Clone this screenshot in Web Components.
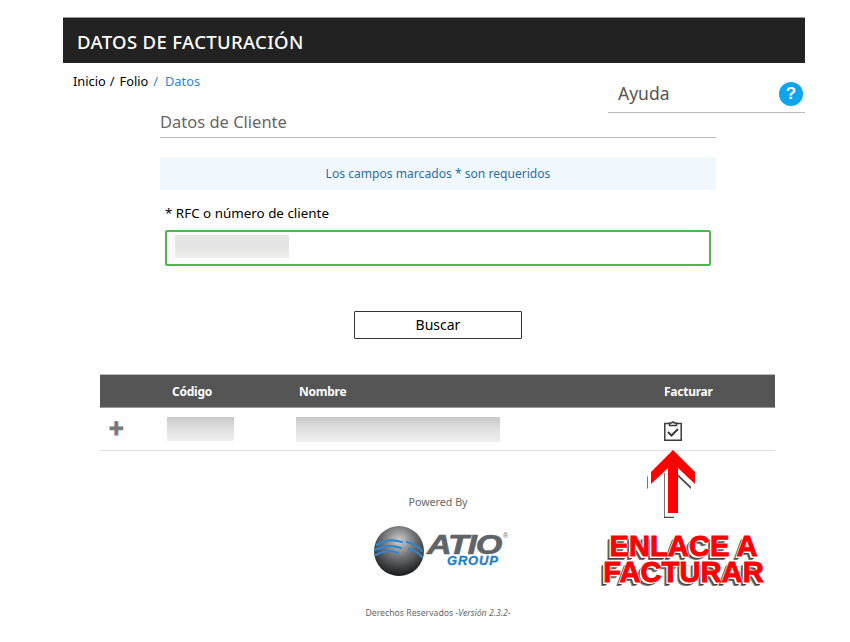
<!DOCTYPE html>
<html lang="es">
<head>
<meta charset="utf-8">
<title>Datos de facturación</title>
<style>
  html, body { margin: 0; background: #fff; }
  body { font-family: "Noto Sans", "Open Sans", sans-serif; color: #000; }
</style>
</head>
<body>
<billing-page>
  <page-header slot="header">DATOS DE FACTURACIÓN</page-header>
  <bread-crumbs slot="crumbs"></bread-crumbs>
  <help-box slot="help">Ayuda</help-box>
  <client-form slot="form"></client-form>
  <result-table slot="table"></result-table>
  <invoice-hint slot="hint"></invoice-hint>
  <powered-footer slot="footer"></powered-footer>
</billing-page>

<script>
class BillingPage extends HTMLElement {
    connectedCallback() {
        this.attachShadow({ mode: 'open' });
        this.shadowRoot.innerHTML = `
            <style>
                :host { display: block; width: 850px; height: 642px; position: relative; overflow: hidden; }
                .top { padding: 17px 45px 0 63px; }
                .sub { display: flex; justify-content: space-between; height: 49px; }
                .form { padding: 0 134px 0 160px; }
                .table { padding: 0 75px 0 100px; margin-top: 35px; }
            </style>
            <div class="top">
                <slot name="header"></slot>
                <div class="sub">
                    <slot name="crumbs"></slot>
                    <slot name="help"></slot>
                </div>
            </div>
            <div class="form"><slot name="form"></slot></div>
            <div class="table"><slot name="table"></slot></div>
            <slot name="footer"></slot>
            <slot name="hint"></slot>
        `;
    }
}

class PageHeader extends HTMLElement {
    connectedCallback() {
        this.attachShadow({ mode: 'open' });
        this.shadowRoot.innerHTML = `
            <style>
                :host {
                    display: flex; align-items: center; height: 46px; padding: 1px 0 0 14px; box-sizing: border-box;
                    background: #222; color: #fff; font-size: 18.5px; font-weight: 500; letter-spacing: 0.35px;
                    border-top: 1px solid #999;
                }
            </style>
            <slot></slot>
        `;
    }
}

class BreadCrumbs extends HTMLElement {
    connectedCallback() {
        this.attachShadow({ mode: 'open' });
        this.shadowRoot.innerHTML = `
            <style>
                :host { display: block; padding: 8px 0 0 10px; font-size: 12.8px; line-height: 20px; }
                .sep { margin: 0 5px 0 4px; }
                .sep.on { margin: 0 7px 0 5px; }
                .on { color: #2a86cf; }
            </style>
            <span>Inicio</span><span class="sep">/</span><span>Folio</span><span class="sep on">/</span><span class="on">Datos</span>
        `;
    }
}

class HelpBox extends HTMLElement {
    connectedCallback() {
        this.attachShadow({ mode: 'open' });
        this.shadowRoot.innerHTML = `
            <style>
                :host {
                    display: flex; align-items: center; justify-content: space-between; box-sizing: border-box;
                    width: 197px; height: 38px; margin-top: 12px; padding: 0 2px 0 10px;
                    border-bottom: 1px solid #bbb; color: #555; font-size: 17.5px;
                }
                .txt { margin-top: -2px; }
                .icon {
                    width: 24px; height: 24px; border-radius: 50%; background: #0ea5ee; color: #fff;
                    display: flex; align-items: center; justify-content: center;
                    font: bold 17px "Liberation Sans", sans-serif;
                }
            </style>
            <span class="txt"><slot></slot></span>
            <span class="icon">?</span>
        `;
    }
}

class ClientForm extends HTMLElement {
    connectedCallback() {
        this.attachShadow({ mode: 'open' });
        this.shadowRoot.innerHTML = `
            <style>
                :host { display: block; }
                h2 { margin: 0; height: 25px; line-height: 20px; font-size: 16.5px; font-weight: 400; color: #666; border-bottom: 1px solid #bbb; }
                .note {
                    margin: 19px 0 0; height: 33px; line-height: 33px; text-align: center;
                    background: #f0f7fd; color: #2c6ea8; font-size: 12.1px;
                }
                label { display: block; margin: 13px 0 0 5px; font-size: 13.4px; line-height: 20px; }
                .field {
                    box-sizing: border-box; margin: 7px 5px 0; height: 36px; padding: 3px 8px;
                    border: 2px solid #4fb54f; border-radius: 2px; background: #fff;
                }
                .blur { display: block; width: 114px; height: 23px; background: linear-gradient(#e6e7e5, #e3e3e3 45%, #eeefed); }
                .actions { display: flex; justify-content: center; margin-top: 45px; }
                button {
                    box-sizing: border-box; width: 168px; height: 28px; padding: 0 0 2px; background: #fff;
                    border: 1px solid #333; border-radius: 1px; font: 14px "Noto Sans", sans-serif; color: #000;
                }
            </style>
            <h2>Datos de Cliente</h2>
            <p class="note">Los campos marcados * son requeridos</p>
            <label>* RFC o número de cliente</label>
            <div class="field"><span class="blur"></span></div>
            <div class="actions"><button>Buscar</button></div>
        `;
    }
}

class ResultTable extends HTMLElement {
    connectedCallback() {
        this.attachShadow({ mode: 'open' });
        this.shadowRoot.innerHTML = `
            <style>
                :host { display: block; }
                .grid { display: grid; grid-template-columns: 72px 127px 365px 1fr; align-items: center; }
                .head {
                    height: 34px; background: #555; color: #fff; font-size: 12px; font-weight: 700; letter-spacing: -0.25px;
                    border-top: 1px solid #bbb; border-bottom: 1px solid #999; box-sizing: border-box;
                }
                .row { height: 42px; border-bottom: 1px solid #ddd; box-sizing: content-box; grid-template-columns: 67px 129px 354px 1fr; }
                .plus { font: bold 25px "Liberation Sans", sans-serif; color: #777; -webkit-text-stroke: 1px #777; padding-left: 9px; line-height: 1; margin-top: -1px; }
                .blur { display: block; height: 24px; background: linear-gradient(#c8c8c8, #dedede 45%, #f0f0f0); }
                .code { width: 67px; }
                .name { width: 204px; height: 25px; }
                svg { display: block; margin-left: 13px; margin-top: 4px; }
            </style>
            <div class="grid head"><span></span><span>Código</span><span>Nombre</span><span>Facturar</span></div>
            <div class="grid row">
                <span class="plus">+</span>
                <span class="blur code"></span>
                <span class="blur name"></span>
                <svg width="20" height="22" viewBox="0 0 20 22" fill="none" stroke="#3a3a3a" stroke-width="1.5">
                    <path d="M6 3.5H1.8v16.8h16.4V3.5H14"/>
                    <path d="M6.5 5.5V3h2.2a1.4 1.4 0 0 1 2.6 0h2.2v2.5z"/>
                    <path d="M5 12l3.5 3.5 6.5-6.5" stroke-width="2"/>
                </svg>
            </div>
        `;
    }
}

class InvoiceHint extends HTMLElement {
    connectedCallback() {
        this.attachShadow({ mode: 'open' });
        this.shadowRoot.innerHTML = `
            <style>
                :host { display: block; position: absolute; left: 590px; top: 448px; width: 190px; height: 145px; }
                svg { position: absolute; left: 50px; top: 0; }
                .msg {
                    position: absolute; left: 6px; top: 85px; width: 175px; text-align: center;
                    font: 900 29.2px/26px "Liberation Sans", sans-serif; color: #f00; white-space: nowrap;
                    -webkit-text-stroke: 1px #f00;
                    text-shadow: 1px 0 #fff, -1px 0 #fff, 0 1px #fff, 0 -1px #fff, -2px 2px #fff, -3px 3px #444, -4px 4px #777;
                }
            </style>
            <svg width="64" height="72" viewBox="0 0 64 72">
                <path transform="translate(-4 5)" fill="#444" d="M33 2L55 24V36L38 20V65H28V20L11 36V24Z"/>
                <path transform="translate(-2.5 3)" fill="#fff" stroke="#fff" stroke-width="1.5" d="M33 2L55 24V36L38 20V65H28V20L11 36V24Z"/>
                <path fill="#f00" d="M33 2L55 24V36L38 20V65H28V20L11 36V24Z"/>
            </svg>
            <div class="msg">ENLACE A<br>FACTURAR</div>
        `;
    }
}

class PoweredFooter extends HTMLElement {
    connectedCallback() {
        this.attachShadow({ mode: 'open' });
        this.shadowRoot.innerHTML = `
            <style>
                :host { display: block; margin-top: 43px; margin-left: 13px; text-align: center; color: #666; width: 850px; }
                .by { font-size: 10.7px; line-height: 16px; }
                .logo { display: flex; justify-content: center; align-items: flex-start; height: 57px; margin-top: 14px; padding-left: 20px; }
                .mark { position: relative; width: 94px; height: 56px; margin-left: 4px; font-family: "Liberation Sans", sans-serif; font-style: italic; font-weight: 900; text-align: left; }
                .atio { position: absolute; left: -2px; top: 7px; font-size: 28px; line-height: 28px; letter-spacing: -1px; color: #5e6468; -webkit-text-stroke: 0.6px #5e6468; transform: scaleX(1.22); transform-origin: left; }
                .reg { position: absolute; left: 74px; top: 8px; font-size: 7px; font-style: normal; font-weight: 400; }
                .group { position: absolute; left: 18px; top: 30px; font-size: 13px; line-height: 14px; letter-spacing: 0.8px; color: #1f7fc4; -webkit-text-stroke: 0.3px #1f7fc4; }
                .legal { font-size: 8.7px; line-height: 12px; margin-top: 26px; }
            </style>
            <div class="by">Powered By</div>
            <div class="logo">
                <svg width="52" height="52" viewBox="0 0 52 52" style="margin-top:1px">
                    <defs>
                        <radialGradient id="ball" cx="0.5" cy="0.3" r="0.72">
                            <stop offset="0" stop-color="#cfd1d2"/>
                            <stop offset="0.45" stop-color="#6f7173"/>
                            <stop offset="1" stop-color="#141516"/>
                        </radialGradient>
                    </defs>
                    <circle cx="26" cy="26" r="25" fill="url(#ball)"/>
                    <g fill="none" stroke="#2f86cf" stroke-width="2.2" stroke-linecap="round">
                        <path d="M4 20C12 15 20 14 29 17"/>
                        <path d="M2 25C12 20 20 20 28 23"/>
                        <path d="M3 30C12 25 18 25 25 28"/>
                        <path d="M34 17C41 19 46 22 49 26"/>
                        <path d="M36 24C41 25 46 28 49 32"/>
                    </g>
                </svg>
                <div class="mark"><span class="atio">ATIO</span><span class="reg">®</span><span class="group">GROUP</span></div>
            </div>
            <div class="legal">Derechos Reservados -<i>Versión 2.3.2</i>-</div>
        `;
    }
}

customElements.define('billing-page', BillingPage);
customElements.define('page-header', PageHeader);
customElements.define('bread-crumbs', BreadCrumbs);
customElements.define('help-box', HelpBox);
customElements.define('client-form', ClientForm);
customElements.define('result-table', ResultTable);
customElements.define('invoice-hint', InvoiceHint);
customElements.define('powered-footer', PoweredFooter);
</script>
</body>
</html>
